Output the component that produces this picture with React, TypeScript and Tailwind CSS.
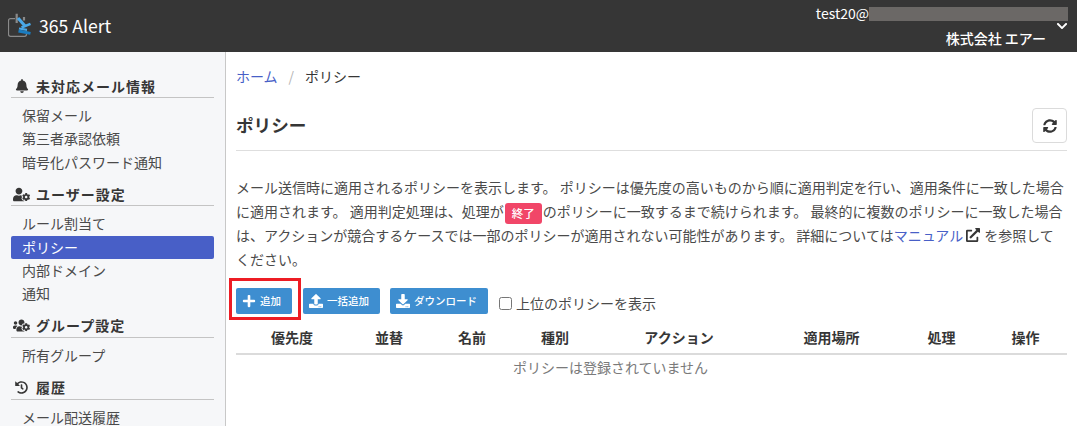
import { FaBell, FaUserCog, FaUsersCog, FaHistory, FaSyncAlt, FaPlus, FaUpload, FaDownload, FaExternalLinkAlt, FaChevronDown } from "react-icons/fa";
import type { ReactNode } from "react";

const Section = ({ icon, title, items, active }: { icon: ReactNode; title: string; items: string[]; active?: string }) => {
  return (
    <div className="mb-[8.5px]">
      <div className="mx-[11px] flex h-[24px] items-center gap-[5px] border-b border-[#c4c4c4] pl-[1px] pt-[1px] text-[14px] font-bold tracking-[1px] text-[#363636]">
        <span className="flex w-[19px] justify-center">{icon}</span>
        {title}
      </div>
      <div className="mt-[6px]">
        {items.map((item) => (
          <div
            key={item}
            className={
              item === active
                ? "mx-[11px] flex h-[23.25px] items-center rounded-[2px] bg-[#485fc7] pl-[11px] text-[14px] text-white"
                : "mx-[11px] flex h-[23.25px] items-center pl-[11px] text-[14px] text-[#4a4a4a]"
            }
          >
            {item}
          </div>
        ))}
      </div>
    </div>
  );
};

const ActionButton = ({ icon, label }: { icon: ReactNode; label: string }) => {
  return (
    <button className="flex h-[26px] items-center gap-[4px] rounded-[2px] bg-[#3e8ed0] pl-[6px] pr-[11px] text-[10.5px] font-medium text-white">
      {icon}
      {label}
    </button>
  );
};

export default function App() {
  const columns = [
    { label: "優先度", w: "w-[112px]" },
    { label: "並替", w: "w-[82px]" },
    { label: "名前", w: "w-[84px]" },
    { label: "種別", w: "w-[82px]" },
    { label: "アクション", w: "w-[166px]" },
    { label: "適用場所", w: "w-[139px]" },
    { label: "処理", w: "w-[81px]" },
    { label: "操作", w: "w-[85px] pl-[2px]" },
  ];

  return (
    <div
      className="relative flex h-screen flex-col overflow-hidden bg-white text-[14px] text-[#4a4a4a]"
      style={{ fontFamily: '"Noto Sans CJK JP", "Noto Sans", sans-serif' }}
    >
      {/* header */}
      <header className="flex h-[52px] flex-none items-start justify-between bg-[#363636] text-white">
        <div className="flex h-full items-center pl-[8px]">
          <svg width="24" height="24" viewBox="0 0 24 24" className="mr-[7px] mt-[-3px]">
            <path d="M7 5.7H2.5a2 2 0 0 0-2 2v13.6a2 2 0 0 0 2 2h14a2 2 0 0 0 2-2v-3" fill="none" stroke="#8a8a8a" strokeWidth="1.2" />
            <path d="M8.7 0.7V10M16 4v3.5" stroke="#8a8a8a" strokeWidth="2.2" />
            <path d="M10 5l7 8" stroke="#4aa8e8" strokeWidth="3.2" />
            <path d="M13.5 14.5l9-3.6" stroke="#4aa8e8" strokeWidth="2.6" />
            <path d="M11 15.5l8 1.4" stroke="#4aa8e8" strokeWidth="2.2" />
            <path d="M10.5 18l12 2.4" stroke="#1a7cc0" strokeWidth="3" />
          </svg>
          <span className="text-[17.6px]">365 Alert</span>
        </div>
        <div className="relative flex flex-col items-end pr-[31px] pt-[3px]">
          <div className="mr-[-22px] flex h-[21px] items-center text-[14px]">
            test20@
            <span className="h-[14px] w-[199px] bg-[#6b6866]" />
          </div>
          <div className="mt-[4px] text-[14px] font-medium">株式会社 エアー</div>
          <FaChevronDown className="absolute right-[9px] top-[20px] text-[12px]" />
        </div>
      </header>

      <div className="flex min-h-0 flex-1">
        {/* sidebar */}
        <aside className="w-[226px] flex-none border-r border-[#c8c8c8] bg-[#f6f7f9] pt-[22px]">
          <Section icon={<FaBell className="text-[14px]" />} title="未対応メール情報" items={["保留メール", "第三者承認依頼", "暗号化パスワード通知"]} />
          <Section icon={<FaUserCog className="text-[17px]" />} title="ユーザー設定" items={["ルール割当て", "ポリシー", "内部ドメイン", "通知"]} active="ポリシー" />
          <Section icon={<FaUsersCog className="text-[17px]" />} title="グループ設定" items={["所有グループ"]} />
          <Section icon={<FaHistory className="text-[13px]" />} title="履歴" items={["メール配送履歴"]} />
        </aside>

        {/* main */}
        <main className="min-w-0 flex-1 px-[10px]">
          <nav className="flex h-[48px] items-center text-[14px]">
            <span className="text-[#485fc7]">ホーム</span>
            <span className="mx-[11px] text-[#b5b5b5]">/</span>
            <span className="text-[#363636]">ポリシー</span>
          </nav>

          <div className="mt-[8px] flex h-[35px] items-center justify-between">
            <h1 className="text-[17.6px] font-bold text-[#363636]">ポリシー</h1>
            <button className="flex h-[35px] w-[35px] items-center justify-center rounded-[4px] border border-[#dbdbdb] bg-white">
              <FaSyncAlt className="text-[14px] text-[#363636]" />
            </button>
          </div>
          <div className="mt-[7px] border-b border-[#dedede]" />

          <p className="mt-[25px] w-[830px] text-[14px] leading-[23.8px] text-[#4a4a4a]">
            メール送信時に適用されるポリシーを表示します。 ポリシーは優先度の高いものから順に適用判定を行い、適用条件に一致した場合に適用されます。 適用判定処理は、処理が
            <span className="mx-[1px] inline-flex h-[21px] items-center rounded-[3px] bg-[#f14668] px-[7px] align-[-1px] text-[11.5px] font-medium leading-none text-white">終了</span>
            のポリシーに一致するまで続けられます。 最終的に複数のポリシーに一致した場合は、アクションが競合するケースでは一部のポリシーが適用されない可能性があります。 詳細については
            <span className="text-[#485fc7]">マニュアル</span>
            <FaExternalLinkAlt className="ml-[3px] mr-[4px] inline align-[-1px] text-[14px] text-[#363636]" />
            を参照してください。
          </p>

          <div className="mt-[16px] flex items-center">
            <ActionButton icon={<FaPlus className="text-[14px]" />} label="追加" />
            <div className="w-[11px]" />
            <ActionButton icon={<FaUpload className="text-[14px]" />} label="一括追加" />
            <div className="w-[10px]" />
            <ActionButton icon={<FaDownload className="text-[14px]" />} label="ダウンロード" />
            <label className="ml-[11px] mt-[5px] flex items-center gap-[4px] text-[14px] text-[#4a4a4a]">
              <input type="checkbox" className="h-[13px] w-[13px]" />
              上位のポリシーを表示
            </label>
          </div>

          <div className="mt-[8px] flex h-[33px] items-center border-b-2 border-[#dbdbdb] text-[14px] font-bold text-[#363636]">
            {columns.map((c) => (
              <div key={c.label} className={`${c.w} text-center`}>
                {c.label}
              </div>
            ))}
          </div>
          <div className="flex h-[26px] items-center justify-center pr-[82px] text-[14px] text-[#7a7a7a]">ポリシーは登録されていません</div>
        </main>
      </div>

      {/* annotation */}
      <div className="absolute left-[229px] top-[278px] h-[42px] w-[72px] border-[3px] border-[#ed1c24]" />
    </div>
  );
}
